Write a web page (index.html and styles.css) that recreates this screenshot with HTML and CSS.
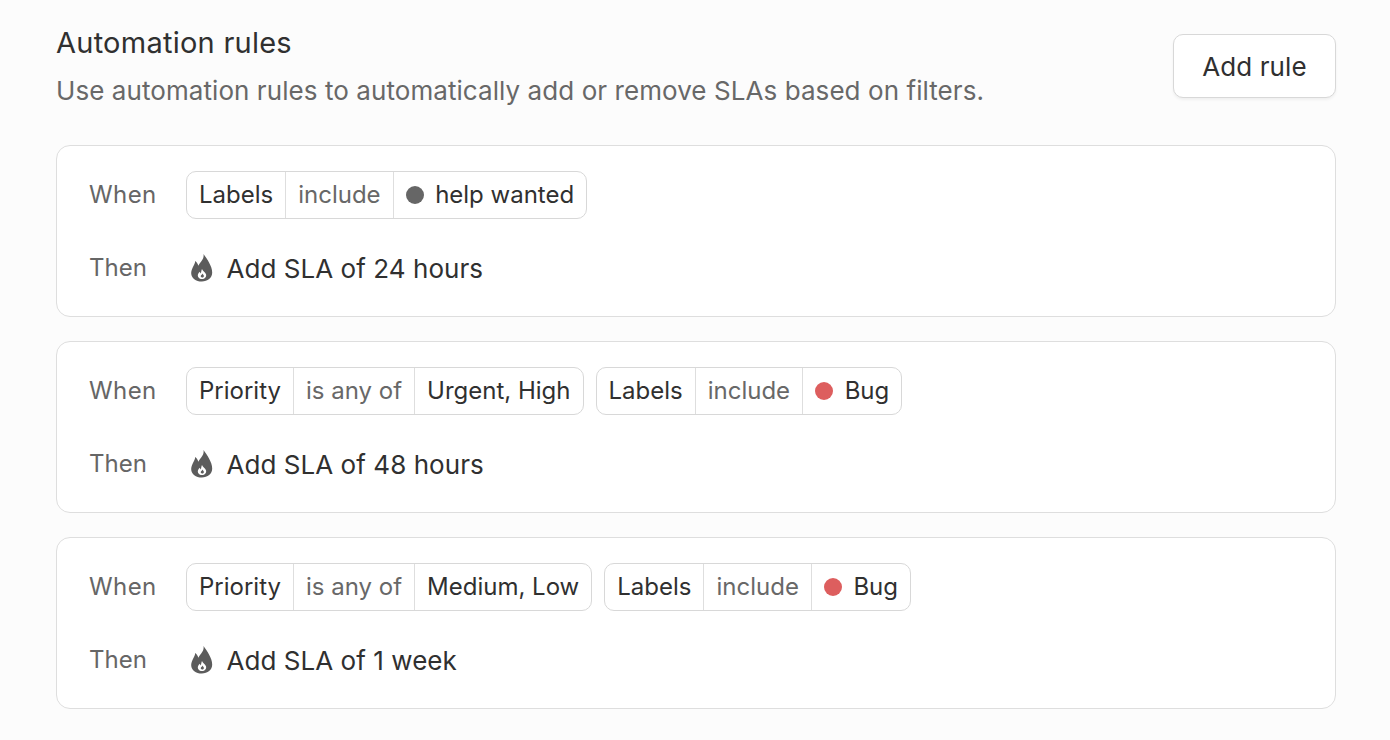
FILE: index.html
```html
<!DOCTYPE html>
<html lang="en">
<head>
    <meta charset="UTF-8">
    <meta name="viewport" content="width=device-width, initial-scale=1.0">
    <title>Automation rules</title>
    <link rel="stylesheet" href="styles.css">
</head>
<body>
    <svg class="defs">
        <symbol id="flame" viewBox="0 0 22 28">
            <path fill-rule="evenodd" d="M12.500 0C13.200 4 11 6.500 9.200 8.800C8.400 9.800 7.800 10.800 7.400 11.800C6.900 10 5.900 8.300 4.200 7C4.200 9.500 2.500 11.700 1.500 14C0.600 15.900 0.200 17.600 0.200 19.200C0.200 24 5 27.600 10.800 27.600C16.600 27.600 21.200 24 21.200 18.600C21.200 12 16 5 12.500 0ZM11 15C11.400 17 14.200 18 15 20.200C15.800 22.800 13.800 25 11 25C8.200 25 6.200 22.800 7 20.200C7.400 19.100 8.100 18.400 8.900 17.800C9.100 18.600 9.400 19.100 9.900 19.500C10.300 18 10.300 16.400 11 15ZM11.600 19.600C11.800 20.500 12.800 21 12.900 21.900C13 22.800 12.200 23.400 11.200 23.400C10.200 23.400 9.500 22.700 9.800 21.800C10.100 21 11.200 20.600 11.600 19.600Z"/>
        </symbol>
    </svg>

    <div class="page">
        <div class="header">
            <div>
                <h2 class="title">Automation rules</h2>
                <p class="subtitle">Use automation rules to automatically add or remove SLAs based on filters.</p>
            </div>
            <button class="add-btn">Add rule</button>
        </div>

        <div class="rule">
            <div class="row">
                <span class="row-label when">When</span>
                <div class="filter">
                    <span class="seg">Labels</span>
                    <span class="seg muted">include</span>
                    <span class="seg"><i class="dot gray"></i>help wanted</span>
                </div>
            </div>
            <div class="row then">
                <span class="row-label">Then</span>
                <span class="action"><svg class="flame"><use href="#flame"/></svg>Add SLA of 24 hours</span>
            </div>
        </div>

        <div class="rule">
            <div class="row">
                <span class="row-label when">When</span>
                <div class="filter">
                    <span class="seg">Priority</span>
                    <span class="seg muted">is any of</span>
                    <span class="seg">Urgent, High</span>
                </div>
                <div class="filter">
                    <span class="seg">Labels</span>
                    <span class="seg muted">include</span>
                    <span class="seg"><i class="dot red"></i>Bug</span>
                </div>
            </div>
            <div class="row then">
                <span class="row-label">Then</span>
                <span class="action"><svg class="flame"><use href="#flame"/></svg>Add SLA of 48 hours</span>
            </div>
        </div>

        <div class="rule">
            <div class="row">
                <span class="row-label when">When</span>
                <div class="filter">
                    <span class="seg">Priority</span>
                    <span class="seg muted">is any of</span>
                    <span class="seg">Medium, Low</span>
                </div>
                <div class="filter">
                    <span class="seg">Labels</span>
                    <span class="seg muted">include</span>
                    <span class="seg"><i class="dot red"></i>Bug</span>
                </div>
            </div>
            <div class="row then">
                <span class="row-label">Then</span>
                <span class="action"><svg class="flame"><use href="#flame"/></svg>Add SLA of 1 week</span>
            </div>
        </div>
    </div>
</body>
</html>
```

FILE: styles.css
```css
body { margin: 0; background: #fcfcfc; color: #303030; font-family: Inter, sans-serif; }
.defs { display: none; }
.page { padding: 24px 54px 0 56px; }

.header { display: flex; justify-content: space-between; align-items: flex-start; margin-bottom: 37px; }
.title { margin: 0; font-size: 29px; line-height: 38px; font-weight: 400; letter-spacing: 0.25px; }
.subtitle { margin: 12px 0 0; font-size: 26px; line-height: 34px; color: #686868; letter-spacing: 0.07px; }
.add-btn { margin-top: 10px; width: 163px; height: 64px; background: #fff; border: 1px solid #d8d8d8; border-radius: 10px; box-shadow: 0 2px 3px rgba(0, 0, 0, 0.05); color: #303030; font-family: inherit; font-size: 26px; font-weight: 400; letter-spacing: 0.1px; }

.rule { box-sizing: border-box; height: 172px; margin-bottom: 24px; padding: 25px 32px 0; background: #fff; border: 1px solid #dedede; border-radius: 14px; }
.row { display: flex; align-items: center; gap: 12px; height: 48px; }
.then { margin-top: 25px; }
.row-label { width: 85px; height: 46px; color: #666; font-size: 24px; line-height: 46px; }
.when { letter-spacing: 0.4px; }
.filter { display: flex; height: 48px; box-sizing: border-box; border: 1px solid #d8d8d8; border-radius: 10px; }
.seg { display: flex; align-items: center; padding: 0 12px 1px; border-left: 1px solid #dedede; font-size: 24px; }
.seg:first-child { border-left: none; }
.muted { color: #686868; }
.dot { width: 18px; height: 18px; margin-right: 11.5px; border-radius: 50%; }
.gray { background: #666; }
.red { background: #dd5e5e; }
.action { display: flex; align-items: center; font-size: 26px; letter-spacing: 0.05px; }
.flame { width: 22px; height: 28px; margin: 0 13.5px 0 5px; fill: #5c5c5c; }
```
